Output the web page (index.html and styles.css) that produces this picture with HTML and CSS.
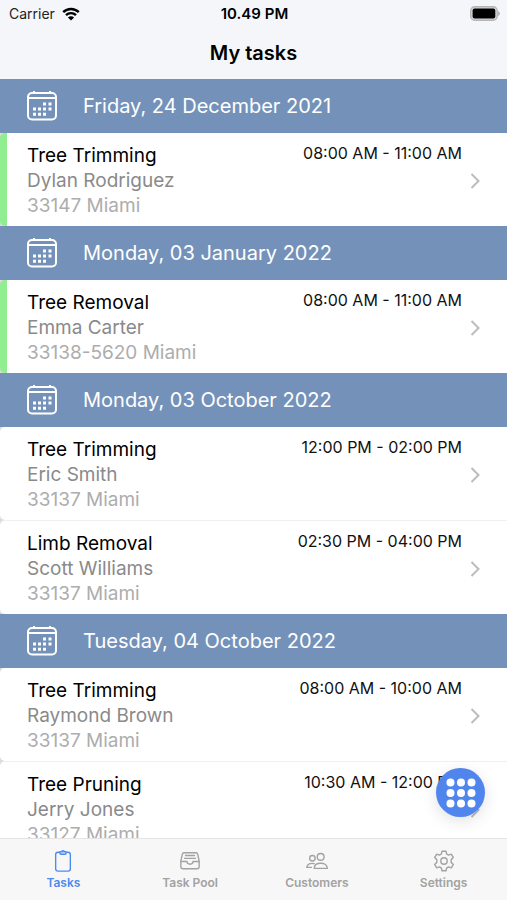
FILE: index.html
```html
<!DOCTYPE html>
<html lang="en">

<head>
    <meta charset="UTF-8">
    <meta name="viewport" content="width=device-width, initial-scale=1.0">
    <title>My tasks</title>
    <link rel="stylesheet" href="styles.css">
</head>

<body>

    <!-- icons used more than once -->
    <svg class="icon-defs" aria-hidden="true">
        <symbol id="calendar" viewBox="0 0 30 30">
            <rect x="1" y="2" width="28" height="26.500" rx="4" fill="none" stroke="currentColor" stroke-width="2" />
            <path d="M7 0v3M23 0v3M1 7h28" fill="none" stroke="currentColor" stroke-width="2" />
            <path d="M16 13h3M21.500 13h3M6 18h3M11 18h3M16 18h3M21.500 18h3M6 23.200h3M11 23.200h3M16 23.200h3"
                stroke="currentColor" stroke-width="3" />
        </symbol>
        <symbol id="chevron" viewBox="0 0 10 16">
            <path d="M1.500 1l7 7-7 7" fill="none" stroke="currentColor" stroke-width="2" />
        </symbol>
    </svg>

    <header class="header">
        <div class="status-bar">
            <div class="carrier">
                Carrier
                <svg class="wifi" viewBox="0 0 18 14">
                    <path d="M1.200 5.200a11 11 0 0 1 15.600 0M4 8.200a7 7 0 0 1 10 0" fill="none" stroke="#000"
                        stroke-width="2.400" />
                    <path d="M9 13.500L5.900 10.500a4.400 4.400 0 0 1 6.200 0z" />
                </svg>
            </div>
            <div class="clock">10.49 PM</div>
            <svg class="battery" viewBox="0 0 30 15">
                <rect x="0.700" y="0.700" width="26.500" height="13.600" rx="4" fill="#d8d8da" stroke="#b5b5b8"
                    stroke-width="1.400" />
                <rect x="2.600" y="2.600" width="22.700" height="9.800" rx="2" />
                <path d="M28 5q2 1 2 2.500T28 10z" fill="#b5b5b8" />
            </svg>
        </div>
        <h1 class="title">My tasks</h1>
    </header>

    <main class="task-list">
        <h2 class="date"><svg class="calendar"><use href="#calendar" /></svg>Friday, 24 December 2021</h2>
        <a class="task done" href="#">
            <div class="task-info">
                <h3>Tree Trimming</h3>
                <p class="customer">Dylan Rodriguez</p>
                <p class="place">33147 Miami</p>
            </div>
            <span class="time">08:00 AM - 11:00 AM</span>
            <svg class="chevron"><use href="#chevron" /></svg>
        </a>

        <h2 class="date"><svg class="calendar"><use href="#calendar" /></svg>Monday, 03 January 2022</h2>
        <a class="task done" href="#">
            <div class="task-info">
                <h3>Tree Removal</h3>
                <p class="customer">Emma Carter</p>
                <p class="place">33138-5620 Miami</p>
            </div>
            <span class="time">08:00 AM - 11:00 AM</span>
            <svg class="chevron"><use href="#chevron" /></svg>
        </a>

        <h2 class="date"><svg class="calendar"><use href="#calendar" /></svg>Monday, 03 October 2022</h2>
        <a class="task" href="#">
            <div class="task-info">
                <h3>Tree Trimming</h3>
                <p class="customer">Eric Smith</p>
                <p class="place">33137 Miami</p>
            </div>
            <span class="time">12:00 PM - 02:00 PM</span>
            <svg class="chevron"><use href="#chevron" /></svg>
        </a>
        <a class="task" href="#">
            <div class="task-info">
                <h3>Limb Removal</h3>
                <p class="customer">Scott Williams</p>
                <p class="place">33137 Miami</p>
            </div>
            <span class="time">02:30 PM - 04:00 PM</span>
            <svg class="chevron"><use href="#chevron" /></svg>
        </a>

        <h2 class="date"><svg class="calendar"><use href="#calendar" /></svg>Tuesday, 04 October 2022</h2>
        <a class="task" href="#">
            <div class="task-info">
                <h3>Tree Trimming</h3>
                <p class="customer">Raymond Brown</p>
                <p class="place">33137 Miami</p>
            </div>
            <span class="time">08:00 AM - 10:00 AM</span>
            <svg class="chevron"><use href="#chevron" /></svg>
        </a>
        <a class="task" href="#">
            <div class="task-info">
                <h3>Tree Pruning</h3>
                <p class="customer">Jerry Jones</p>
                <p class="place">33127 Miami</p>
            </div>
            <span class="time">10:30 AM - 12:00 PM</span>
            <svg class="chevron"><use href="#chevron" /></svg>
        </a>
    </main>

    <button class="menu-btn" aria-label="Menu">
        <svg viewBox="0 0 30 30" fill="#fff">
            <circle cx="4.500" cy="4.500" r="4" />
            <circle cx="15" cy="4.500" r="4" />
            <circle cx="25.500" cy="4.500" r="4" />
            <circle cx="4.500" cy="15" r="4" />
            <circle cx="15" cy="15" r="4" />
            <circle cx="25.500" cy="15" r="4" />
            <circle cx="4.500" cy="25.500" r="4" />
            <circle cx="15" cy="25.500" r="4" />
            <circle cx="25.500" cy="25.500" r="4" />
        </svg>
    </button>

    <nav class="tabs">
        <a class="tab active" href="#">
            <svg viewBox="0 0 24 24">
                <rect x="4" y="2.500" width="16" height="20.500" rx="2.500" />
                <path d="M8.500 3q0-1.500 2-1.500 1.500-1.300 3 0 2 0 2 1.500 0 1.800-1.500 1.800h-4q-1.500 0-1.500-1.800z"
                    fill="#a9c7f7" />
            </svg>
            Tasks
        </a>
        <a class="tab" href="#">
            <svg viewBox="0 0 24 24">
                <path d="M5.500 3h13q1.500 0 2 2l1.500 7v6q0 2.500-2.500 2.500h-15Q2 20.500 2 18v-6l1.500-7q.5-2 2-2z" />
                <path d="M2 12.500h6.500q.5 3 3.500 3t3.500-3H22M6.500 6h11M5.500 9.200h13" />
            </svg>
            Task Pool
        </a>
        <a class="tab" href="#">
            <svg viewBox="0 0 24 24">
                <circle cx="16" cy="7.500" r="3.700" />
                <path d="M9 20c0-3.500 3-5.500 7-5.500s7.200 2 7.200 5.500z" />
                <circle cx="7" cy="9" r="3" />
                <path d="M9.500 15C5 13.700 1 15.500.8 19H6.500" />
            </svg>
            Customers
        </a>
        <a class="tab" href="#">
            <svg viewBox="0 0 24 24">
                <circle cx="12" cy="12" r="3.500" />
                <path d="M9.800 1.300h4.400l.6 3 2.200 1.300 3-1 2.200 3.700-2.400 2.200v3l2.400 2.200-2.200 3.700-3-1-2.200 1.300-.6 3H9.800l-.6-3L7 18.400l-3 1-2.200-3.700 2.400-2.200v-3L1.800 8.300 4 4.600l3 1 2.200-1.300z" stroke-linejoin="round" />
            </svg>
            Settings
        </a>
    </nav>

</body>

</html>
```
FILE: styles.css
```css
* {
    margin: 0;
    padding: 0;
    box-sizing: border-box;
    font-family: Inter, sans-serif;
}

body {
    display: flex;
    flex-direction: column;
    height: 100vh;
    background: #fff;
    color: #000;
    position: relative;
    overflow: hidden;
}

a {
    color: inherit;
    text-decoration: none;
}

.icon-defs {
    position: absolute;
    width: 0;
    height: 0;
}

.header {
    background: #f5f6fa;
}

.status-bar {
    display: grid;
    grid-template-columns: 1fr auto 1fr;
    align-items: center;
    height: 27px;
    padding: 0 7px 0 9px;
    font-size: 14px;
}

.carrier {
    display: flex;
    align-items: center;
    gap: 7px;
    color: #222;
}

.wifi {
    width: 18px;
    height: 14px;
}

.clock {
    font-size: 15px;
    font-weight: 600;
}

.battery {
    width: 30px;
    height: 15px;
    justify-self: end;
}

.title {
    font-size: 20px;
    font-weight: 600;
    line-height: 52px;
    text-align: center;
}

.task-list {
    flex: 1;
    min-height: 0;
    overflow: hidden;
    background: #dcdcde;
}

.date {
    display: flex;
    align-items: center;
    gap: 26px;
    height: 54px;
    padding: 0 27px;
    background: #7492b9;
    color: #fff;
    font-size: 20px;
    font-weight: 400;
}

.calendar {
    width: 30px;
    height: 30px;
}

.task {
    display: flex;
    padding: 10px 27px 8px;
    border-radius: 5px 0 0 5px;
    background: #fff;
    line-height: 25px;
}

.task.done {
    padding-left: 20px;
    border-left: 7px solid #90ee90;
}

.task + .task {
    border-top: 1px solid #f0f0f2;
}

.task-info {
    flex: 1;
}

.task h3,
.task p {
    font-size: 19px;
    font-weight: 400;
}

.task .customer {
    color: #8a8a8a;
}

.task .place {
    color: #adadad;
}

.time {
    font-size: 16px;
    line-height: 20px;
    color: #111;
}

.chevron {
    align-self: center;
    width: 10px;
    height: 16px;
    margin-left: 8px;
    color: #bcbcbe;
}

.menu-btn {
    position: absolute;
    right: 22px;
    bottom: 83px;
    display: flex;
    align-items: center;
    justify-content: center;
    width: 49px;
    height: 49px;
    border: none;
    border-radius: 50%;
    background: #5085ee;
    box-shadow: 0 4px 16px rgba(0, 0, 0, 0.12);
    cursor: pointer;
}

.menu-btn svg {
    width: 30px;
    height: 30px;
}

.tabs {
    display: flex;
    height: 62px;
    border-top: 1px solid #e4e4e4;
    background: #f7f7f7;
}

.tab {
    flex: 1;
    display: flex;
    flex-direction: column;
    align-items: center;
    gap: 2px;
    padding-top: 11px;
    color: #a2a2a2;
    font-size: 12px;
    font-weight: 600;
    line-height: 18px;
}

.tab svg {
    width: 22px;
    height: 22px;
    fill: none;
    stroke: currentColor;
    stroke-width: 1.5px;
}

.tab.active {
    color: #4d8af0;
}
```
